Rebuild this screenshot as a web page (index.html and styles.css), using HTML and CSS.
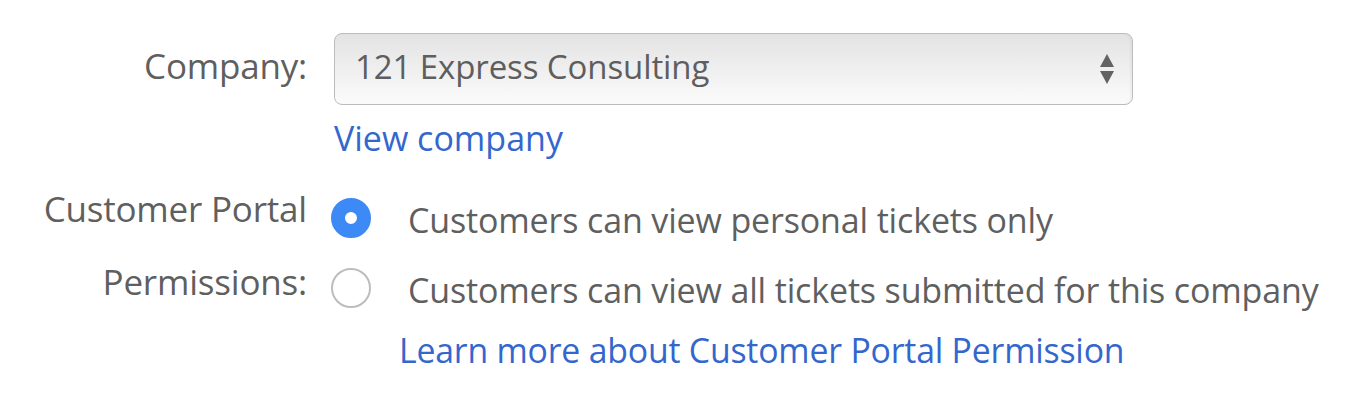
FILE: index.html
```html
<!DOCTYPE html>
<html>
<head>
<meta charset="utf-8">
<link rel="stylesheet" href="styles.css">
</head>
<body>
<div class="form">
  <div class="row company">
    <div class="label company-label">Company:</div>
    <div class="field">
      <div class="select">
        <span class="select-text">121 Express Consulting</span>
        <svg class="arrows" width="16" height="32" viewBox="0 0 16 32"><path d="M8 1 L15 14 L1 14 Z" fill="#626262"/><path d="M1 18 L15 18 L8 31 Z" fill="#626262"/></svg>
      </div>
      <a class="link view" href="#">View company</a>
    </div>
  </div>
  <div class="row portal">
    <div class="label portal-label">Customer Portal<br>Permissions:</div>
    <div class="field options">
      <div class="option first">
        <span class="radio checked"></span>
        <span class="opt-text">Customers can view personal tickets only</span>
      </div>
      <div class="option second">
        <span class="radio"></span>
        <span class="opt-text">Customers can view all tickets submitted for this company</span>
      </div>
      <a class="link learn" href="#">Learn more about Customer Portal Permission</a>
    </div>
  </div>
</div>
</body>
</html>
```
FILE: styles.css
```css
html, body { margin: 0; padding: 0; background: #fff; }
body { font-family: "Open Sans", Lato, sans-serif; color: #5f5f5f; font-variant-ligatures: none; }
.form { padding-top: 33px; }
.row { display: grid; grid-template-columns: 307px 1fr; column-gap: 27px; }
.label { text-align: right; font-size: 35px; letter-spacing: -0.2px; }
.company-label { line-height: 66px; }
.select {
  border: 1px solid #bcbcbc; border-radius: 8px;
  background: linear-gradient(#e3e3e3, #fbfbfb);
  display: flex; align-items: center; justify-content: space-between;
  padding: 0 17px 6px 20px; box-sizing: border-box; width: 799px; height: 72px;
  box-shadow: inset -2px 0 2px rgba(0,0,0,0.04);
}
.arrows { margin-top: 6px; }
.select-text { font-size: 33px; color: #5e5e5e; letter-spacing: -0.1px; }
.link { color: #3467cd; text-decoration: none; display: block; line-height: 40px; }
.view { margin-top: 13px; font-size: 34px; letter-spacing: 0; }
.portal { margin-top: 14px; }
.portal-label { line-height: 73px; }
.options { padding-top: 26px; margin-left: -3px; }
.option { display: flex; align-items: center; height: 40px; }
.second { margin-top: 30px; }
.radio {
  width: 40px; height: 40px; border-radius: 50%; box-sizing: border-box;
  border: 2px solid #bdbdbd; background: #fff; flex: none; margin-right: 37px;
}
.radio.checked { border: 14px solid #3d8af7; background: #fff; }
.opt-text { font-size: 34px; line-height: 40px; letter-spacing: -0.15px; position: relative; top: 2px; white-space: nowrap; }
.learn { margin-left: 68px; margin-top: 22px; font-size: 33.8px; letter-spacing: -0.2px; }
```
